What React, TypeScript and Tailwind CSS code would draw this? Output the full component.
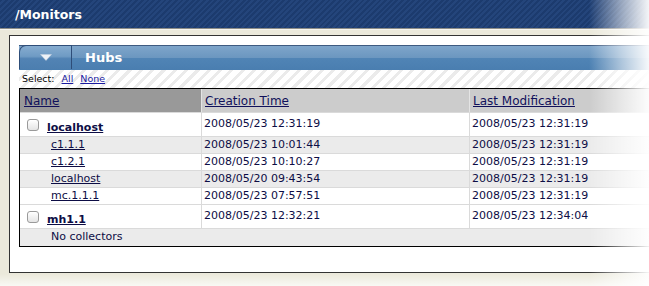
import React from "react";

const font = "font-['DejaVu_Sans','Verdana',sans-serif]";

function Checkbox() {
  return (
    <span className="block w-[12px] h-[12px] rounded-[3px] border border-[#9a9a9a] bg-[linear-gradient(#ffffff,#e4e4e4)] shadow-[inset_0_1px_0_#fff]" />
  );
}

type Row = { name: string; created: string; modified: string; hub?: boolean; shade?: boolean };

const rows: Row[] = [
  { name: "localhost", created: "2008/05/23 12:31:19", modified: "2008/05/23 12:31:19", hub: true },
  { name: "c1.1.1", created: "2008/05/23 10:01:44", modified: "2008/05/23 12:31:19", shade: true },
  { name: "c1.2.1", created: "2008/05/23 10:10:27", modified: "2008/05/23 12:31:19" },
  { name: "localhost", created: "2008/05/20 09:43:54", modified: "2008/05/23 12:31:19", shade: true },
  { name: "mc.1.1.1", created: "2008/05/23 07:57:51", modified: "2008/05/23 12:31:19" },
  { name: "mh1.1", created: "2008/05/23 12:32:21", modified: "2008/05/23 12:34:04", hub: true },
];

function TableRow({ row }: { row: Row }) {
  const bg = row.shade ? "bg-[#ebebeb]" : "bg-white";
  const h = row.hub ? "h-[24px]" : "h-[17px]";
  return (
    <div className={`flex ${h} ${bg} border-t border-[#dadada] text-[11px] text-[#0d0d45]`}>
      {row.hub ? (
        <div className="w-[181px] flex items-center pl-[7px] gap-[8px]">
          <Checkbox />
          <a href="#" className="font-bold underline pt-[7px]">
            {row.name}
          </a>
        </div>
      ) : (
        <div className="w-[181px] flex items-center pl-[31px]">
          <a href="#" className="underline">
            {row.name}
          </a>
        </div>
      )}
      <div className="w-[268px] flex items-center pl-[2px] border-l border-[#dadada]">{row.created}</div>
      <div className="flex-1 flex items-center pl-[2px] border-l border-[#dadada] whitespace-nowrap">{row.modified}</div>
    </div>
  );
}

export default function App() {
  return (
    <div className={`relative w-[649px] h-[286px] overflow-hidden bg-[#ebe9db] ${font}`}>
      {/* title bar */}
      <div className="h-[28px] flex items-center pl-[15px] pt-[2px] bg-[repeating-linear-gradient(135deg,#1c3b6e_0px,#1c3b6e_2px,#24457b_2px,#24457b_4px)]">
        <span className="text-white font-bold text-[12.5px]">/Monitors</span>
      </div>
      <div className="h-[1px] bg-[#8d8d88]" />
      <div className="h-[1px] bg-[#f6f5ee]" />

      {/* white page box */}
      <div className="ml-[9px] mt-[5px] h-[238px] border border-r-0 border-[#333] bg-white pl-[9px] pt-[9px]">
        {/* Hubs header */}
        <div className="flex h-[25px] border-t border-[#3e5a80] bg-[linear-gradient(#7ea5ca,#6c97c0_48%,#5084b5_52%,#4a7eb0)]">
          <div className="w-[53px] h-full rounded-tl-[7px] border-l border-r border-[#2e4d78] -mt-[1px] border-t flex items-center justify-center bg-[linear-gradient(#86acd0,#6f9bc4_45%,#5283b4_55%,#4c7eaf)]">
            <svg width="12" height="7" viewBox="0 0 12 7">
              <path d="M0.5 0.5 L11.5 0.5 L6 6.5 Z" fill="#eef2f7" stroke="#c7d3e0" strokeWidth="0.5" />
            </svg>
          </div>
          <div className="flex items-center pl-[13px] text-white font-bold text-[13px]">Hubs</div>
        </div>

        {/* select row */}
        <div className="h-[18px] flex items-center pl-[3px] gap-[7px] text-[9.5px] bg-[repeating-linear-gradient(135deg,#ffffff_0px,#ffffff_5px,#ebebeb_5px,#ebebeb_8px)]">
          <span className="text-black">Select:</span>
          <a href="#" className="text-[#1a1aa0] underline">All</a>
          <a href="#" className="text-[#1a1aa0] underline">None</a>
        </div>

        {/* table */}
        <div className="border-t border-l border-b border-black">
          <div className="flex h-[23px] text-[12px] text-[#10105a]">
            <div className="w-[181px] bg-[#999999] flex items-center pl-[4px]">
              <a href="#" className="underline">Name</a>
            </div>
            <div className="w-[268px] bg-[#cccccc] border-l border-[#e4e4e4] flex items-center pl-[3px]">
              <a href="#" className="underline">Creation Time</a>
            </div>
            <div className="flex-1 bg-[#cccccc] border-l border-[#e4e4e4] flex items-center pl-[3px]">
              <a href="#" className="underline whitespace-nowrap">Last Modification</a>
            </div>
          </div>
          {rows.slice(0, 5).map((r, i) => (
            <TableRow key={i} row={r} />
          ))}
          <TableRow row={rows[5]} />
          <div className="h-[18px] flex items-center pl-[31px] bg-[#ebebeb] border-t border-[#dadada] text-[11px] text-[#0d0d45]">
            No collectors
          </div>
        </div>
      </div>

      {/* fades over the edges */}
      <div className="absolute top-0 right-0 h-full w-[60px] bg-[linear-gradient(to_right,rgba(255,255,255,0),rgba(255,255,255,0.55)_55%,rgba(255,255,255,0.95))]" />
      <div className="absolute bottom-0 left-0 w-full h-[12px] bg-[linear-gradient(rgba(255,255,255,0),rgba(255,255,255,0.7))]" />
    </div>
  );
}
